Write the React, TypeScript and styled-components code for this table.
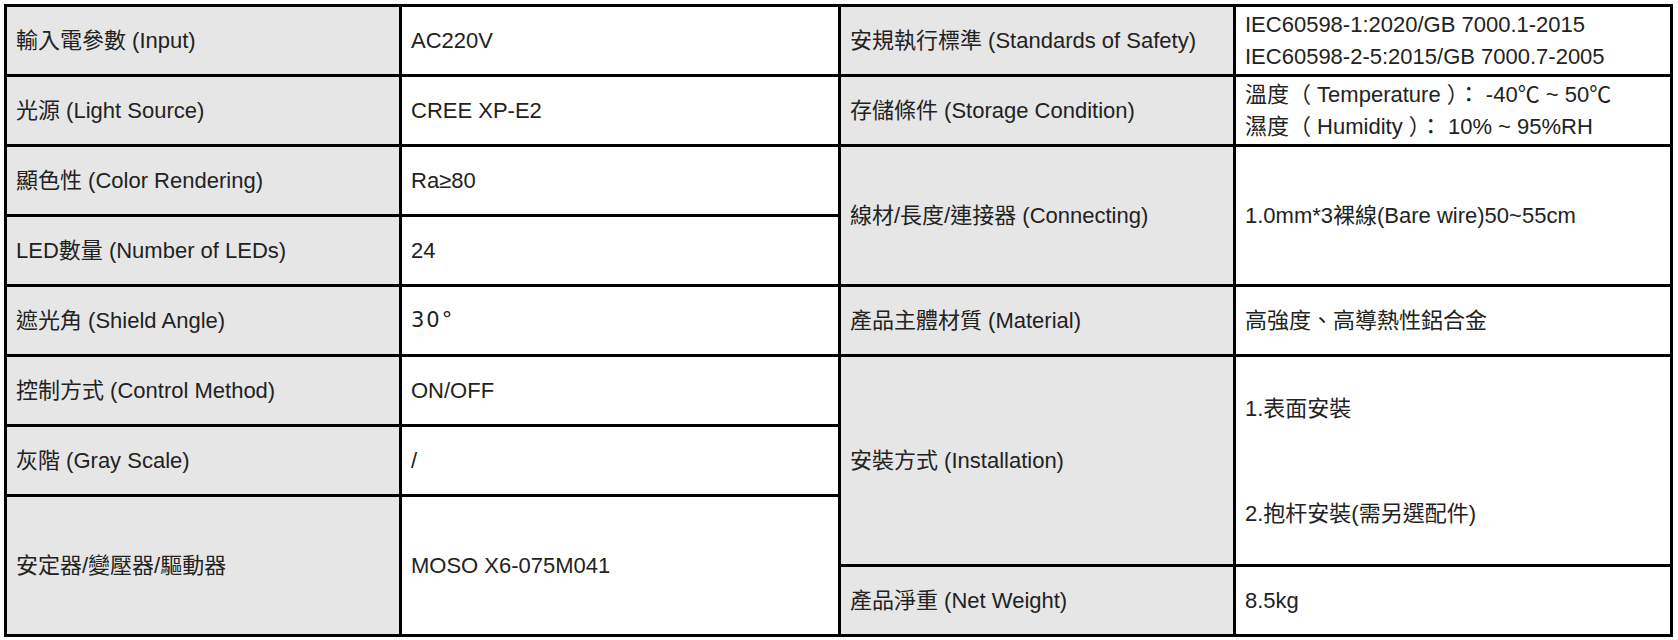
import React from 'react';
import styled, { createGlobalStyle } from 'styled-components';

const GlobalStyle = createGlobalStyle`
	body {
		margin: 4px;
		background: #fff;
		font-family: "Liberation Sans", "Noto Sans CJK TC", sans-serif;
		color: #222;
	}
`;

const Table = styled.div`
	display: grid;
	grid-template-columns: 392px 436px 392px 434px;
	grid-template-rows: repeat(9, 67px);
	gap: 3px;
	padding: 3px;
	background: #000;
	width: max-content;
`;

const Cell = styled.div<{ $label?: boolean; $col: number; $row: number; $span?: number; $lh?: number }>`
	grid-column: ${ p => p.$col };
	grid-row: ${ p => p.$row } / span ${ p => p.$span || 1 };
	background: ${ p => (p.$label ? '#e6e6e6' : '#fff') };
	display: flex;
	flex-direction: column;
	justify-content: center;
	padding: 0 8px 0 9px;
	font-size: 22px;
	line-height: ${ p => p.$lh || 35 }px;
	white-space: pre;
	overflow: visible;
`;

const Line = styled.div`
	min-height: 1lh;
`;

const Degree = styled.span`
	font-family: "DejaVu Sans", sans-serif;
	font-size: 21px;
	letter-spacing: 2px;
`;

type Row = { label: string; value: React.ReactNode; row: number; span?: number; lh?: number };

const left: Row[] = [
	{ label: '輸入電參數 (Input)', value: 'AC220V', row: 1 },
	{ label: '光源 (Light Source)', value: 'CREE XP-E2', row: 2 },
	{ label: '顯色性 (Color Rendering)', value: 'Ra≥80', row: 3 },
	{ label: 'LED數量 (Number of LEDs)', value: '24', row: 4 },
	{ label: '遮光角 (Shield Angle)', value: <Degree>30°</Degree>, row: 5 },
	{ label: '控制方式 (Control Method)', value: 'ON/OFF', row: 6 },
	{ label: '灰階 (Gray Scale)', value: '/', row: 7 },
	{ label: '安定器/變壓器/驅動器', value: 'MOSO X6-075M041', row: 8, span: 2 },
];

const right: Row[] = [
	{
		label: '安規執行標準 (Standards of Safety)',
		value: (
			<>
				<Line>IEC60598-1:2020/GB 7000.1-2015</Line>
				<Line>IEC60598-2-5:2015/GB 7000.7-2005</Line>
			</>
		),
		row: 1,
		lh: 32,
	},
	{
		label: '存儲條件 (Storage Condition)',
		value: (
			<>
				<Line>溫度（ Temperature ）： -40℃ ~ 50℃</Line>
				<Line>濕度（ Humidity ）： 10% ~ 95%RH</Line>
			</>
		),
		row: 2,
		lh: 32,
	},
	{ label: '線材/長度/連接器 (Connecting)', value: '1.0mm*3裸線(Bare wire)50~55cm', row: 3, span: 2 },
	{ label: '產品主體材質 (Material)', value: '高強度、高導熱性鋁合金', row: 5 },
	{
		label: '安裝方式 (Installation)',
		value: (
			<>
				<Line>1.表面安裝</Line>
				<Line />
				<Line />
				<Line>2.抱杆安裝(需另選配件)</Line>
			</>
		),
		row: 6,
		span: 3,
	},
	{ label: '產品淨重 (Net Weight)', value: '8.5kg', row: 9 },
];

const App = () => {
	return (
		<>
			<GlobalStyle />
			<Table>
				{ left.map(r => (
					<React.Fragment key={ r.label }>
						<Cell $label $col={ 1 } $row={ r.row } $span={ r.span }>{ r.label }</Cell>
						<Cell $col={ 2 } $row={ r.row } $span={ r.span }>{ r.value }</Cell>
					</React.Fragment>
				)) }
				{ right.map(r => (
					<React.Fragment key={ r.label }>
						<Cell $label $col={ 3 } $row={ r.row } $span={ r.span }>{ r.label }</Cell>
						<Cell $col={ 4 } $row={ r.row } $span={ r.span } $lh={ r.lh }>{ r.value }</Cell>
					</React.Fragment>
				)) }
			</Table>
		</>
	);
};

export default App;
